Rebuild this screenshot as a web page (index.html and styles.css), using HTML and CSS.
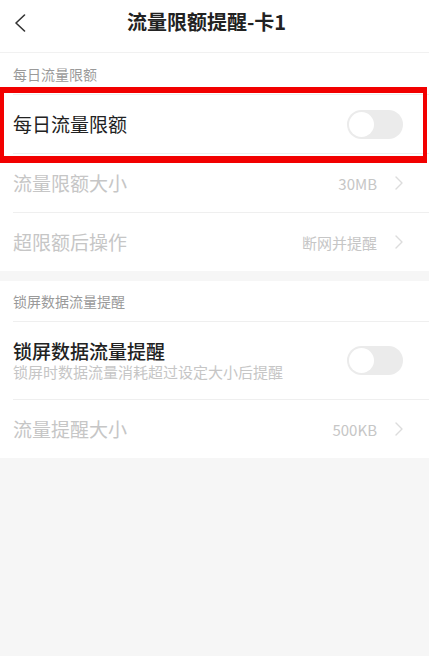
FILE: index.html
```html
<!DOCTYPE html>
<html lang="zh-CN">
<head>
<meta charset="utf-8">
<title>流量限额提醒-卡1</title>
<link rel="stylesheet" href="styles.css">
</head>
<body>
<header class="header">
  <span class="back">
    <svg width="12" height="18" viewBox="0 0 12 18"><polyline points="10.5,1 2,9 10.5,17" fill="none" stroke="#333" stroke-width="1.6" stroke-linecap="round" stroke-linejoin="round"/></svg>
  </span>
  <h1 class="title">流量限额提醒-卡1</h1>
  <span></span>
</header>

<section class="section">
  <div class="section-label">每日流量限额</div>
  <div class="row">
    <span class="row-title">每日流量限额</span>
    <span class="switch"><span class="knob"></span></span>
  </div>
  <div class="row disabled">
    <span class="row-title">流量限额大小</span>
    <span class="value">30MB</span>
    <svg class="chev" width="8" height="14" viewBox="0 0 8 14"><polyline points="1,1 7,7 1,13" fill="none" stroke="#dcdcdc" stroke-width="1.4" stroke-linecap="round" stroke-linejoin="round"/></svg>
  </div>
  <div class="row disabled">
    <span class="row-title">超限额后操作</span>
    <span class="value">断网并提醒</span>
    <svg class="chev" width="8" height="14" viewBox="0 0 8 14"><polyline points="1,1 7,7 1,13" fill="none" stroke="#dcdcdc" stroke-width="1.4" stroke-linecap="round" stroke-linejoin="round"/></svg>
  </div>
</section>

<section class="section second">
  <div class="section-label label-2">锁屏数据流量提醒</div>
  <div class="row tall">
    <div class="row-text">
      <span class="row-title strong">锁屏数据流量提醒</span>
      <span class="row-sub">锁屏时数据流量消耗超过设定大小后提醒</span>
    </div>
    <span class="switch"><span class="knob"></span></span>
  </div>
  <div class="row disabled">
    <span class="row-title">流量提醒大小</span>
    <span class="value">500KB</span>
    <svg class="chev" width="8" height="14" viewBox="0 0 8 14"><polyline points="1,1 7,7 1,13" fill="none" stroke="#dcdcdc" stroke-width="1.4" stroke-linecap="round" stroke-linejoin="round"/></svg>
  </div>
</section>

<div class="highlight"></div>
</body>
</html>
```

FILE: styles.css
```css
* { box-sizing: border-box; }

html, body {
  margin: 0;
  padding: 0;
}

body {
  background: #f6f6f6;
  font-family: "Noto Sans CJK SC", "Noto Sans", sans-serif;
  color: #222;
  min-height: 656px;
  position: relative;
}

.header {
  height: 53px;
  background: #fff;
  border-bottom: 1px solid #f1f1f1;
  display: grid;
  grid-template-columns: 40px 1fr 56px;
  align-items: center;
}

.back {
  display: flex;
  padding-left: 14px;
  margin-top: -6px;
}

.title {
  margin: 0;
  margin-top: -8px;
  text-align: center;
  font-size: 20px;
  font-weight: 700;
  color: #222;
  line-height: 24px;
}

.section {
  background: #fff;
}

.second {
  margin-top: 10px;
}

.section-label {
  height: 41px;
  padding-left: 13px;
  display: flex;
  align-items: center;
  font-size: 14px;
  color: #9a9a9a;
}

.label-2 {
  height: 40px;
}

.row {
  height: 59px;
  margin-left: 13px;
  padding-right: 26px;
  border-top: 1px solid #efefef;
  display: flex;
  align-items: center;
}

.tall {
  height: 78px;
}

.row-title {
  font-size: 19px;
  line-height: 22px;
  color: #222;
  flex: 1;
}

.strong {
  font-weight: 500;
}

.row-text {
  flex: 1;
  display: flex;
  flex-direction: column;
}

.row-sub {
  font-size: 15px;
  line-height: 19px;
  color: #c6c6c6;
}

.disabled .row-title {
  color: #c6c6c6;
}

.value {
  font-size: 15px;
  color: #c6c6c6;
  margin-right: 18px;
}

.chev {
  display: block;
}

.switch {
  width: 56px;
  height: 29px;
  border-radius: 15px;
  background: #ebebeb;
  display: flex;
  align-items: center;
  padding-left: 2px;
}

.knob {
  width: 25px;
  height: 25px;
  border-radius: 50%;
  background: #fff;
}

.highlight {
  position: absolute;
  top: 87px;
  left: 0;
  width: 427px;
  height: 76px;
  border-style: solid;
  border-color: #f20000;
  border-width: 6px 4px 7px 4px;
  pointer-events: none;
}
```
